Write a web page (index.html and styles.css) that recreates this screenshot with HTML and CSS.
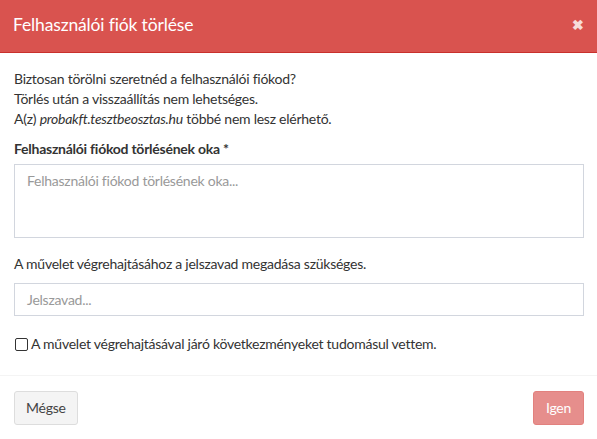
FILE: index.html
```html
<!DOCTYPE html>
<html lang="hu">
<head>
<meta charset="utf-8">
<link rel="stylesheet" href="styles.css">
</head>
<body>
<div class="modal">
  <div class="modal-header">
    <h4 class="modal-title">Felhasználói fiók törlése</h4>
    <span class="close">&#x2716;</span>
  </div>
  <div class="modal-body">
    <p class="intro">Biztosan törölni szeretnéd a felhasználói fiókod?<br>Törlés után a visszaállítás nem lehetséges.<br>A(z) <em>probakft.tesztbeosztas.hu</em> többé nem lesz elérhető.</p>
    <label class="label">Felhasználói fiókod törlésének oka <span class="req">*</span></label>
    <div class="textarea">Felhasználói fiókod törlésének oka...</div>
    <p class="help">A művelet végrehajtásához a jelszavad megadása szükséges.</p>
    <div class="input">Jelszavad...</div>
    <div class="check"><span class="box"></span>A művelet végrehajtásával járó következményeket tudomásul vettem.</div>
  </div>
  <div class="modal-footer">
    <span class="btn btn-default">Mégse</span>
    <span class="btn btn-danger">Igen</span>
  </div>
</div>
</body>
</html>
```
FILE: styles.css
```css
* { box-sizing: border-box; }
html, body { margin: 0; padding: 0; background: #fff; }
body {
  font-family: "Lato", "Liberation Sans", sans-serif;
  font-size: 14px;
  line-height: 20px;
  letter-spacing: -0.25px;
  color: #333;
  width: 597px;
  height: 439px;
  overflow: hidden;
}
.modal { display: flex; flex-direction: column; height: 439px; }
.modal-header {
  background: #d9534f;
  height: 53px;
  border-bottom: 1px solid #c9302c;
  display: flex;
  align-items: center;
  justify-content: space-between;
  padding: 0 13px 2px 13px;
}
.modal-title {
  margin: 0;
  color: #fff;
  font-size: 17.5px;
  letter-spacing: -0.15px;
  font-weight: 400;
  line-height: 24px;
}
.close {
  color: #fff;
  opacity: 0.8;
  font-size: 14px;
  font-weight: 700;
  line-height: 14px;
  margin-top: -1px;
  margin-right: 0;
}
.modal-body {
  padding: 16px 13px 0 14px;
  flex: 1;
}
.intro { margin: 0 0 10px; }
.label { display: block; font-weight: 700; margin-bottom: 5px; }
.req { color: #333; }
.textarea, .input {
  border: 1px solid #d2d6de;
  color: #999;
  padding: 6px 12px;
  width: 100%;
}
.textarea { height: 74px; }
.input { height: 33px; }
.help { margin: 16px 0 9px; }
.check {
  display: flex;
  align-items: center;
  margin-top: 18px;
}
.box {
  width: 13px;
  height: 13px;
  border: 1px solid #333;
  border-radius: 2px;
  margin-right: 3px;
  margin-left: 1px;
}
.modal-footer {
  border-top: 1px solid #f4f4f4;
  height: 64px;
  padding: 15px 13px 14px 14px;
  display: flex;
  justify-content: space-between;
  align-items: flex-start;
}
.btn {
  display: inline-block;
  height: 34px;
  line-height: 32px;
  padding: 0 11px;
  border: 1px solid transparent;
  border-radius: 3px;
  font-size: 14px;
}
.btn-danger { padding: 0 12px; }
.btn-default {
  background: #f4f4f4;
  border-color: #ddd;
  color: #444;
}
.btn-danger {
  background: #d9534f;
  border-color: #d43f3a;
  color: #fff;
  opacity: 0.65;
}
```
